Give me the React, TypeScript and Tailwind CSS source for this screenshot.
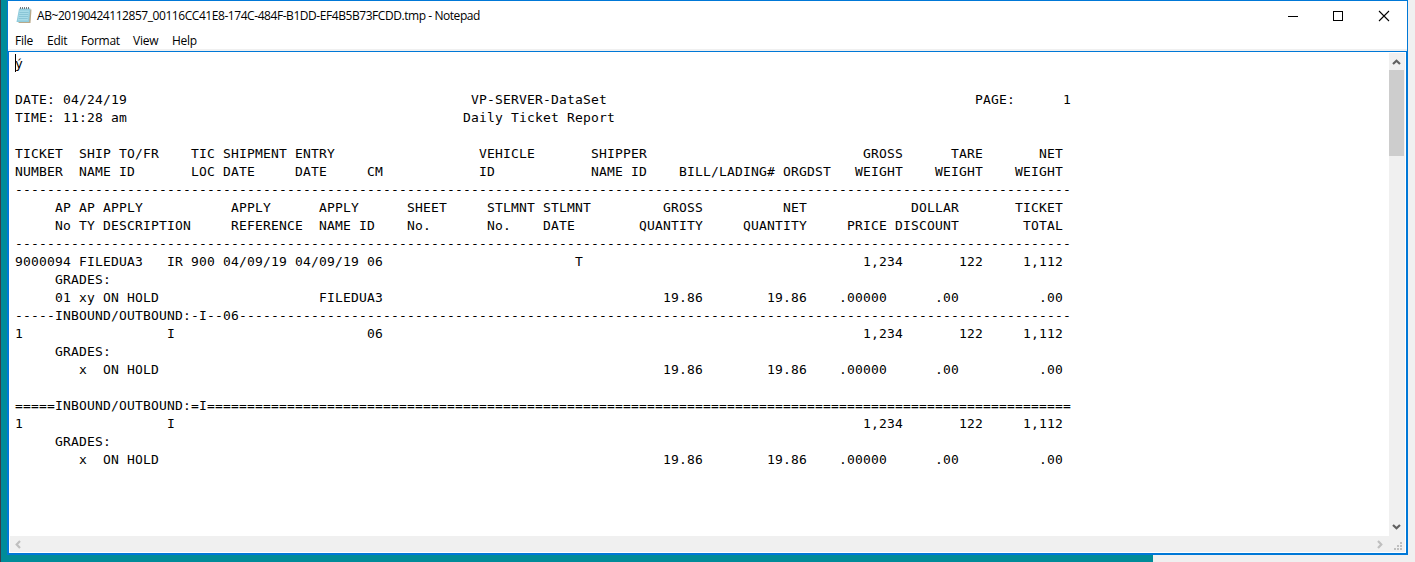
type Segment = [column: number, text: string];

const COLUMNS = 132;

function line(...segments: Segment[]): string {
  return segments.reduce((out, [column, text]) => out.padEnd(column) + text, "");
}

const totals: Segment[] = [[106, "1,234"], [118, "122"], [126, "1,112"]];
const grades: Segment[] = [[81, "19.86"], [94, "19.86"], [103, ".00000"], [115, ".00"], [128, ".00"]];
const rule = "-".repeat(COLUMNS);

const lines: string[] = [
  "ý",
  "",
  line([0, "DATE: 04/24/19"], [57, "VP-SERVER-DataSet"], [120, "PAGE:"], [131, "1"]),
  line([0, "TIME: 11:28 am"], [56, "Daily Ticket Report"]),
  "",
  line([0, "TICKET"], [8, "SHIP TO/FR"], [22, "TIC"], [26, "SHIPMENT"], [35, "ENTRY"], [58, "VEHICLE"], [72, "SHIPPER"], [106, "GROSS"], [117, "TARE"], [128, "NET"]),
  line([0, "NUMBER"], [8, "NAME ID"], [22, "LOC"], [26, "DATE"], [35, "DATE"], [44, "CM"], [58, "ID"], [72, "NAME ID"], [83, "BILL/LADING#"], [96, "ORGDST"], [105, "WEIGHT"], [115, "WEIGHT"], [125, "WEIGHT"]),
  rule,
  line([5, "AP"], [8, "AP"], [11, "APPLY"], [27, "APPLY"], [38, "APPLY"], [49, "SHEET"], [59, "STLMNT"], [66, "STLMNT"], [81, "GROSS"], [96, "NET"], [112, "DOLLAR"], [125, "TICKET"]),
  line([5, "No"], [8, "TY"], [11, "DESCRIPTION"], [27, "REFERENCE"], [38, "NAME ID"], [49, "No."], [59, "No."], [66, "DATE"], [78, "QUANTITY"], [91, "QUANTITY"], [104, "PRICE"], [110, "DISCOUNT"], [126, "TOTAL"]),
  rule,
  line([0, "9000094"], [8, "FILEDUA3"], [19, "IR"], [22, "900"], [26, "04/09/19"], [35, "04/09/19"], [44, "06"], [70, "T"], ...totals),
  line([5, "GRADES:"]),
  line([5, "01"], [8, "xy"], [11, "ON HOLD"], [38, "FILEDUA3"], ...grades),
  "-----INBOUND/OUTBOUND:-I--06".padEnd(COLUMNS, "-"),
  line([0, "1"], [19, "I"], [44, "06"], ...totals),
  line([5, "GRADES:"]),
  line([8, "x"], [11, "ON HOLD"], ...grades),
  "",
  "=====INBOUND/OUTBOUND:=I".padEnd(COLUMNS, "="),
  line([0, "1"], [19, "I"], ...totals),
  line([5, "GRADES:"]),
  line([8, "x"], [11, "ON HOLD"], ...grades),
];

function NotepadIcon() {
  return (
    <svg width="16" height="17" viewBox="0 0 16 17" className="mb-px shrink-0">
      <path d="M4 2.500h11.500L14.500 16H2.500z" fill="#b9a98a" />
      <path d="M3 1.500h11.500L13 15H.5z" fill="#8fcbdc" />
      <path d="M3.500 3.500h9.500L12 13.500H1.800z" fill="#a8dbe8" />
      <path d="M3.500 5.500h9M3.200 7.500h9M3 9.500h9M2.700 11.500h9" stroke="#7dbbce" strokeWidth=".7" />
      <path d="M4 1h10" stroke="#49545a" strokeWidth="1.600" strokeDasharray="1 1" />
    </svg>
  );
}

function Chevron({ className, color }: { className: string; color: string }) {
  return (
    <svg width="9" height="9" viewBox="0 0 9 9" className={className}>
      <path d="M1 6L4.500 2.700L8 6" fill="none" stroke={color} strokeWidth="2.200" />
    </svg>
  );
}

function WindowControls() {
  return (
    <div className="ml-auto flex h-full items-center gap-[34px] pr-[17px] pb-px">
      <svg width="12" height="12" viewBox="0 0 12 12" shapeRendering="crispEdges">
        <path d="M2 6.500h10" stroke="#000" />
      </svg>
      <svg width="12" height="12" viewBox="0 0 12 12" shapeRendering="crispEdges">
        <path d="M1.500 1.500h9v9h-9z" fill="none" stroke="#000" />
      </svg>
      <svg width="12" height="12" viewBox="0 0 12 12">
        <path d="M1 1l10 10M11 1L1 11" stroke="#000" strokeWidth="1.100" />
      </svg>
    </div>
  );
}

function MenuBar() {
  return (
    <nav className="flex h-[18px] shrink-0 items-center pt-[2px] pl-[7px] font-['Open_Sans',sans-serif] text-[12px] leading-4 tracking-[-0.25px] text-black">
      <span className="w-8">File</span>
      <span className="w-[34px]">Edit</span>
      <span className="w-[52px]">Format</span>
      <span className="w-[39px]">View</span>
      <span>Help</span>
    </nav>
  );
}

function VerticalScrollbar() {
  return (
    <div className="flex w-4 shrink-0 flex-col bg-[#f0f0f0]">
      <div className="flex h-[17px] items-center justify-center pt-px pr-px">
        <Chevron className="" color="#606060" />
      </div>
      <div className="h-[86px] w-[15px] bg-[#cdcdcd]" />
      <div className="mt-auto flex h-[19px] items-center justify-center pr-px">
        <Chevron className="rotate-180" color="#606060" />
      </div>
    </div>
  );
}

function HorizontalScrollbar() {
  return (
    <div className="flex h-4 shrink-0 items-center bg-[#f0f0f0] pl-1">
      <Chevron className="-rotate-90" color="#bfbfbf" />
      <Chevron className="ml-auto rotate-90" color="#bfbfbf" />
      <svg width="8" height="8" viewBox="0 0 8 8" className="mt-1 mr-[3px] ml-[10px]" shapeRendering="crispEdges">
        <path d="M6 0h2v2H6zM3 3h2v2H3zM6 3h2v2H6zM0 6h2v2H0zM3 6h2v2H3zM6 6h2v2H6z" fill="#bfbfbf" />
      </svg>
    </div>
  );
}

export default function App() {
  return (
    <div className="flex h-[562px] w-[1415px] overflow-hidden bg-[#f0f0f0]">
      <div className="w-px shrink-0 bg-[#3b3b4b]" />
      <div className="w-[6px] shrink-0 bg-[#008c99]" />
      <div className="flex w-[1401px] shrink-0 flex-col">
        <div className="flex h-[555px] flex-col border border-[#0078d7] bg-white">
          <header className="flex h-[30px] shrink-0 items-center pl-[8px]">
            <NotepadIcon />
            <h1 className="ml-[5px] font-['Open_Sans',sans-serif] text-[12px] tracking-[-0.44px] whitespace-pre text-black">
              AB~20190424112857_00116CC41E8-174C-484F-B1DD-EF4B5B73FCDD.tmp - Notepad
            </h1>
            <WindowControls />
          </header>
          <MenuBar />
          <div className="h-[2px] shrink-0 bg-[#f0f0f0]" />
          <main className="flex min-h-0 flex-1 flex-col border border-r-0 border-[#0078d7]">
            <div className="flex min-h-0 flex-1 flex-col border-r border-[#0078d7] p-px">
              <div className="flex min-h-0 flex-1">
                <div className="relative min-w-0 flex-1 overflow-hidden pt-[2px] pl-[5px]">
                  <pre className="font-['DejaVu_Sans_Mono',monospace] text-[13px] leading-[18px] tracking-[0.174px] text-black">
                    {lines.join("\n")}
                  </pre>
                  <div className="absolute top-px left-[5px] h-[18px] w-px bg-black" />
                </div>
                <VerticalScrollbar />
              </div>
              <HorizontalScrollbar />
            </div>
          </main>
        </div>
        <div className="h-[7px] w-[1146px] bg-[#008c99]" />
      </div>
    </div>
  );
}
